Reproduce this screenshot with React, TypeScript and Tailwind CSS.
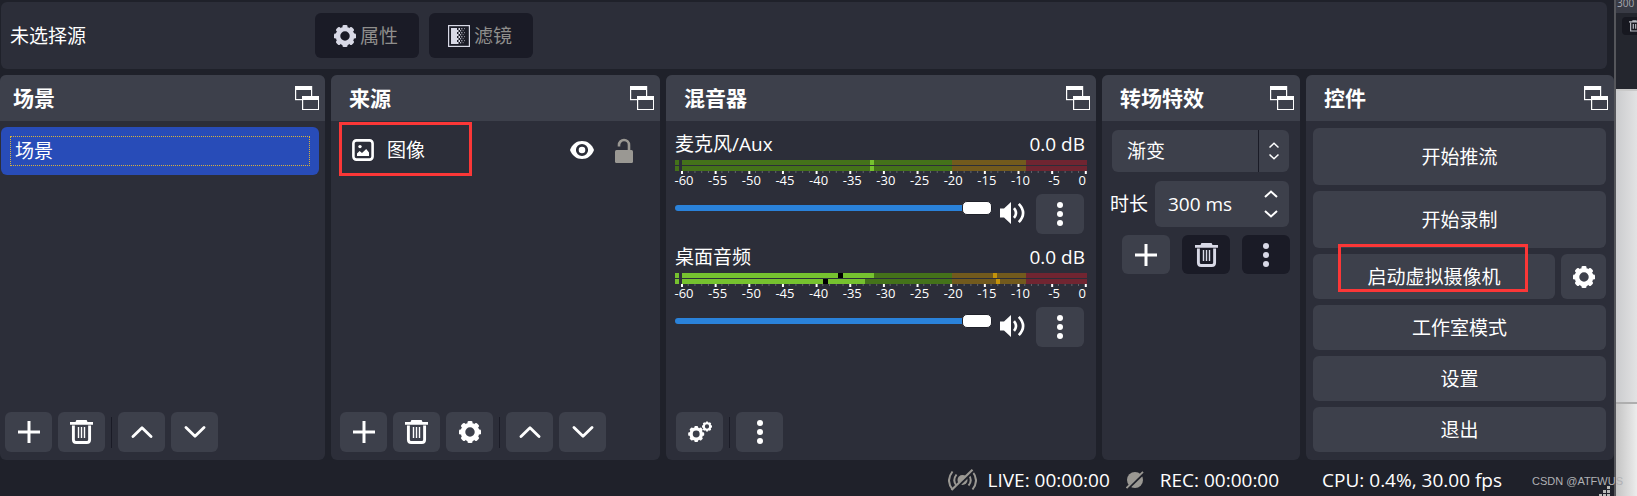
import React, { useState } from "react";
import type { ReactNode } from "react";

/* ---------- icons ---------- */

function GearShape({ cx, cy, r }: { cx: number; cy: number; r: number }) {
  const tooth = r * 0.46;
  return (
    <g>
      <circle cx={cx} cy={cy} r={r * 0.64} fill="none" stroke="currentColor" strokeWidth={r * 0.42} />
      {[0, 45, 90, 135, 180, 225, 270, 315].map((a) => (
        <rect
          key={a}
          x={cx - tooth / 2}
          y={cy - r}
          width={tooth}
          height={r * 0.3}
          rx={r * 0.12}
          fill="currentColor"
          transform={`rotate(${a} ${cx} ${cy})`}
        />
      ))}
    </g>
  );
}

const GearIcon = () => (
  <svg className="size-[22px] shrink-0" viewBox="0 0 22 22" aria-hidden="true">
    <GearShape cx={11} cy={11} r={11} />
  </svg>
);

const GearsIcon = () => (
  <svg className="size-6 shrink-0" viewBox="0 0 24 24" aria-hidden="true">
    <GearShape cx={8.2} cy={14} r={8} />
    <GearShape cx={19} cy={6.5} r={5} />
  </svg>
);

const PlusIcon = () => (
  <svg className="size-[22px] shrink-0" viewBox="0 0 22 22" fill="none" stroke="currentColor" strokeWidth="3" aria-hidden="true">
    <path d="M11 0v22M0 11h22" />
  </svg>
);

const TrashIcon = () => (
  <svg className="h-6 w-[23px] shrink-0" viewBox="0 0 23 24" fill="none" stroke="currentColor" aria-hidden="true">
    <path d="M0 3.3h23" strokeWidth="2.8" />
    <path d="M7 1.2h9" strokeWidth="2.4" strokeLinecap="round" />
    <path d="M3.4 5.5v14.2q0 2.8 2.8 2.8h10.6q2.8 0 2.8-2.8V5.5" strokeWidth="2.9" />
    <path d="M8.5 7v11M11.5 7v11M14.5 7v11" strokeWidth="1.4" />
  </svg>
);

const ChevronIcon = ({ down = false }: { down?: boolean }) => (
  <svg className="h-3 w-[22px] shrink-0" viewBox="0 0 22 12" fill="none" stroke="currentColor" strokeWidth="2.8" strokeLinecap="round" strokeLinejoin="round" aria-hidden="true">
    <path d={down ? "M2 1.5l9 8.8 9-8.8" : "M2 10.5l9-8.8 9 8.8"} />
  </svg>
);

const DotsIcon = () => (
  <svg className="h-6 w-[6px] shrink-0" viewBox="0 0 6 24" fill="currentColor" aria-hidden="true">
    <circle cx="3" cy="3" r="3" />
    <circle cx="3" cy="12" r="3" />
    <circle cx="3" cy="21" r="3" />
  </svg>
);

const FilterIcon = () => (
  <svg className="size-[22px] shrink-0" viewBox="0 0 22 22" fill="currentColor" aria-hidden="true">
    <rect x="0.6" y="0.6" width="20.8" height="20.8" fill="none" stroke="currentColor" strokeWidth="1.2" />
    <rect x="3" y="3" width="6" height="16" />
    {[0, 1, 2, 3, 4, 5, 6, 7].map((i) => (
      <g key={i}>
        <rect x={i % 2 ? 9 : 10.5} y={3 + i * 2} width="1.5" height="2" />
        <rect x={i % 2 ? 12 : 13.2} y={3 + i * 2} width="1.2" height="1.4" opacity="0.8" />
        <rect x={i % 2 ? 14.6 : 16} y={3 + i * 2} width="1" height="1.2" opacity="0.55" />
      </g>
    ))}
  </svg>
);

const PopoutIcon = () => (
  <svg className="size-6 shrink-0" viewBox="0 0 24 24" aria-hidden="true">
    <rect x="0.6" y="0.6" width="16" height="13" fill="none" stroke="#fff" strokeWidth="1.2" />
    <rect x="0" y="0" width="17" height="4" fill="#fff" />
    <rect x="7.6" y="10.6" width="16" height="13" fill="#3d404b" stroke="#fff" strokeWidth="1.2" />
    <rect x="7" y="10" width="17" height="4" fill="#fff" />
  </svg>
);

const ImageIcon = () => (
  <svg className="size-[22px] shrink-0" viewBox="0 0 22 22" aria-hidden="true">
    <rect x="1.4" y="1.4" width="19.2" height="19.2" rx="3" fill="none" stroke="#fff" strokeWidth="2.6" />
    <circle cx="8" cy="7.6" r="1.7" fill="#fff" />
    <path d="M5 17v-2.4l2.6-2.6 2.4 2 4.2-4L17 13.6V17z" fill="#fff" />
  </svg>
);

const EyeIcon = () => (
  <svg className="h-5 w-6" viewBox="0 0 24 20" aria-hidden="true">
    <path d="M0 10C2 4.4 6.5 1 12 1s10 3.4 12 9c-2 5.6-6.5 9-12 9S2 15.6 0 10z" fill="#fff" />
    <circle cx="12" cy="10" r="4.7" fill="none" stroke="#2c2e39" strokeWidth="2.8" />
  </svg>
);

const UnlockIcon = () => (
  <svg className="h-[25px] w-[18px]" viewBox="0 0 18 25" aria-hidden="true">
    <rect x="0" y="12" width="18" height="13" rx="1.5" fill="#9a9893" />
    <path d="M4 8.5V7a5 5 0 0 1 10 0v6" fill="none" stroke="#9a9893" strokeWidth="2.6" />
  </svg>
);

const SpeakerIcon = () => (
  <svg className="h-[22px] w-[25px]" viewBox="0 0 25 22" fill="none" stroke="#fff" strokeWidth="2.6" aria-hidden="true">
    <path d="M0 6.5h4L11 0v22l-7-6.5H0z" fill="#fff" stroke="none" />
    <path d="M14 6.2q4 4.8 0 9.6M18.8 1.8q8.6 9.2 0 18.4" />
  </svg>
);

const LiveIcon = () => (
  <svg className="h-[22px] w-[29px]" viewBox="0 0 29 22" fill="none" stroke="#9a9893" strokeWidth="2" aria-hidden="true">
    <path d="M4.5 2.5q-7 9 0 18M8.5 5.5q-4.5 6 0 11M24.5 2.5q7 9 0 18M20.5 5.5q4.5 6 0 11" />
    <circle cx="14.5" cy="11" r="5" fill="#9a9893" stroke="none" />
    <path d="M4.5 22.5L25.5 2" stroke="#1f212a" strokeWidth="2.5" />
    <path d="M3.5 21L24.5 0.8" strokeWidth="2.2" />
  </svg>
);

const RecIcon = () => (
  <svg className="size-[18px]" viewBox="0 0 18 18" aria-hidden="true">
    <circle cx="9" cy="9" r="8" fill="#9a9893" />
    <path d="M1 18.5L18.5 1.5" stroke="#1f212a" strokeWidth="2.4" />
    <path d="M0.5 17L17 0.8" stroke="#9a9893" strokeWidth="1.8" />
  </svg>
);

/* ---------- building blocks ---------- */

function Dock({ title, children }: { title: string; children: ReactNode }) {
  return (
    <section className="group flex min-w-0 flex-col overflow-hidden rounded-md bg-[#2c2e39]">
      <header className="flex h-[46px] shrink-0 items-center justify-between bg-[#3d404b] pr-[6px] pl-[18px] group-first:pl-[13px]">
        <h2 className="text-[21px] leading-6 font-bold text-white">{title}</h2>
        <button aria-label={`${title} 浮动`}>
          <PopoutIcon />
        </button>
      </header>
      {children}
    </section>
  );
}

function ToolButton({ label, children }: { label: string; children: ReactNode }) {
  return (
    <button aria-label={label} className="flex h-10 w-[47px] items-center justify-center rounded-md bg-[#3d404b] text-white">
      {children}
    </button>
  );
}

const Separator = () => <span className="h-[31px] w-px bg-[#1a1b26]" />;

function WideButton({ children, tall = false }: { children: ReactNode; tall?: boolean }) {
  return (
    <button className={`w-full rounded-md bg-[#3d404b] text-center text-white ${tall ? "h-[57px]" : "h-[45px]"}`}>
      {children}
    </button>
  );
}

/* Level meter: positions are percentages of a 412-unit wide scale. */
const pct = (v: number) => `${(v / 412) * 100}%`;

type Mark = { x: number; w: number; color: string };

function Meter({ rows }: { rows: Mark[][] }) {
  const ticks = Array.from({ length: 61 }, (_, i) => i);
  return (
    <svg className="block h-[31px] w-full overflow-visible" aria-label="电平">
      {rows.map((marks, r) => (
        <g key={r}>
          {[
            { x: 0, w: 4, color: "#44721a" },
            { x: 7, w: 270, color: "#44721a" },
            { x: 277, w: 74, color: "#725a1d" },
            { x: 351, w: 61, color: "#702531" },
            ...marks,
          ].map((m, i) => (
            <rect key={i} x={pct(m.x)} y={r * 6} width={pct(m.w)} height={5} fill={m.color} />
          ))}
        </g>
      ))}
      {ticks.map((i) => (
        <rect
          key={i}
          x={pct(6 + i * 6.73)}
          y={11}
          width={i % 5 === 0 ? 2 : 1}
          height={i % 5 === 0 ? 3 : 2}
          fill={i % 5 === 0 ? "#fff" : "#62646c"}
        />
      ))}
      {ticks
        .filter((i) => i % 5 === 0)
        .map((i) => (
          <text
            key={i}
            x={i === 60 ? pct(411) : pct(9 + i * 6.73)}
            y={25}
            fontSize="13"
            fill="#fff"
            textAnchor={i === 60 ? "end" : "middle"}
          >
            {i - 60}
          </text>
        ))}
    </svg>
  );
}

function Channel({ name, rows }: { name: string; rows: Mark[][] }) {
  const [volume, setVolume] = useState(100);
  return (
    <div className="flex h-[113px] flex-col">
      <div className="flex items-center justify-between pr-[2px] leading-7">
        <span>{name}</span>
        <span>0.0 dB</span>
      </div>
      <div className="pt-[2px]">
        <Meter rows={rows} />
      </div>
      <div className="flex items-start pt-[3px] pr-[3px]">
        <input
          type="range"
          aria-label={`${name} 音量`}
          value={volume}
          onChange={(e) => setVolume(Number(e.target.value))}
          className="mt-[6px] h-4 min-w-0 flex-1 appearance-none bg-transparent [&::-webkit-slider-runnable-track]:h-[6px] [&::-webkit-slider-runnable-track]:rounded-sm [&::-webkit-slider-runnable-track]:bg-[#2a82da] [&::-webkit-slider-thumb]:-mt-[4px] [&::-webkit-slider-thumb]:h-[14px] [&::-webkit-slider-thumb]:w-[30px] [&::-webkit-slider-thumb]:appearance-none [&::-webkit-slider-thumb]:rounded-[5px] [&::-webkit-slider-thumb]:border [&::-webkit-slider-thumb]:border-[#1f212a] [&::-webkit-slider-thumb]:bg-white"
        />
        <button aria-label={`${name} 静音`} className="mt-2 ml-2">
          <SpeakerIcon />
        </button>
        <button aria-label={`${name} 选项`} className="ml-[11px] flex h-10 w-12 items-center justify-center rounded-md bg-[#3d404b]">
          <DotsIcon />
        </button>
      </div>
    </div>
  );
}

/* ---------- page ---------- */

export default function App() {
  const [duration, setDuration] = useState("300 ms");
  return (
    <div className="relative flex min-h-screen overflow-hidden bg-[#1f212a] font-['Open_Sans','Noto_Sans_CJK_SC',sans-serif] text-[19px] leading-6 text-white">
      <main className="flex min-w-0 flex-1 flex-col pt-[2px]">
        <div className="mr-[7px] ml-px flex h-[67px] items-center rounded-md bg-[#2c2e39] pl-[9px]">
          <span className="w-[305px]">未选择源</span>
          <div className="flex gap-[10px] text-[#8f8e8c]">
            <button disabled className="flex h-[45px] w-[104px] items-center justify-center gap-1 rounded-md bg-[#1a1b26] pr-[2px]">
              <span className="text-[#d8d9e6]"><GearIcon /></span>
              属性
            </button>
            <button disabled className="flex h-[45px] w-[104px] items-center justify-center gap-1 rounded-md bg-[#1a1b26] pr-[2px]">
              <span className="text-[#d8d9e6]"><FilterIcon /></span>
              滤镜
            </button>
          </div>
        </div>

        <div className="mt-[6px] grid flex-1 grid-cols-[325fr_329fr_430fr_198fr_308fr] gap-[6px]">
          <Dock title="场景">
            <ul className="flex-1 pt-[6px] pr-[6px] pl-px">
              <li className="rounded-md bg-[#284cb8] p-[9px]">
                <button className="block w-full border border-dotted border-[#d8b23c] px-[4px] py-[2px] text-left">场景</button>
              </li>
            </ul>
            <div className="flex items-center gap-[6px] pb-2 pl-[5px]">
              <ToolButton label="添加场景"><PlusIcon /></ToolButton>
              <ToolButton label="删除场景"><TrashIcon /></ToolButton>
              <Separator />
              <ToolButton label="上移场景"><ChevronIcon /></ToolButton>
              <ToolButton label="下移场景"><ChevronIcon down /></ToolButton>
            </div>
          </Dock>

          <Dock title="来源">
            <ul className="flex-1 pt-px pl-2">
              <li className="flex items-center">
                <div className="flex h-[54px] w-[133px] items-center gap-[13px] border-[3px] border-[#fb3737] pt-[2px] pl-[10px]">
                  <ImageIcon />
                  <span>图像</span>
                </div>
                <div className="ml-auto flex items-center gap-[21px] pt-[2px] pr-[27px]">
                  <button aria-label="隐藏图像"><EyeIcon /></button>
                  <button aria-label="锁定图像"><UnlockIcon /></button>
                </div>
              </li>
            </ul>
            <div className="flex items-center gap-[6px] pb-2 pl-[9px]">
              <ToolButton label="添加来源"><PlusIcon /></ToolButton>
              <ToolButton label="删除来源"><TrashIcon /></ToolButton>
              <ToolButton label="来源属性"><GearIcon /></ToolButton>
              <Separator />
              <ToolButton label="上移来源"><ChevronIcon /></ToolButton>
              <ToolButton label="下移来源"><ChevronIcon down /></ToolButton>
            </div>
          </Dock>

          <Dock title="混音器">
            <div className="flex-1 px-[9px] pt-[9px]">
              <Channel
                name="麦克风/Aux"
                rows={[
                  [{ x: 195, w: 4, color: "#76c22f" }],
                  [{ x: 195, w: 4, color: "#76c22f" }],
                ]}
              />
              <Channel
                name="桌面音频"
                rows={[
                  [
                    { x: 0, w: 4, color: "#76c22f" },
                    { x: 7, w: 192, color: "#76c22f" },
                    { x: 163, w: 5, color: "#000" },
                    { x: 318, w: 4, color: "#c4930b" },
                  ],
                  [
                    { x: 0, w: 4, color: "#76c22f" },
                    { x: 7, w: 183, color: "#76c22f" },
                    { x: 148, w: 5, color: "#000" },
                    { x: 321, w: 4, color: "#c4930b" },
                  ],
                ]}
              />
            </div>
            <div className="flex items-center gap-[6px] pb-2 pl-[10px]">
              <ToolButton label="高级音频属性"><GearsIcon /></ToolButton>
              <Separator />
              <ToolButton label="混音器菜单"><DotsIcon /></ToolButton>
            </div>
          </Dock>

          <Dock title="转场特效">
            <div className="flex flex-col pt-[9px] pr-[11px] pl-[8px]">
              <div className="relative ml-[2px]">
                <select aria-label="转场" className="h-[42px] w-full appearance-none rounded-md bg-[#3d404b] pl-[15px] text-white">
                  <option>渐变</option>
                </select>
                <span className="pointer-events-none absolute inset-y-0 right-0 flex w-[31px] items-center justify-center border-l border-[#1a1b26]">
                  <svg className="h-[18px] w-[10px]" viewBox="0 0 10 18" fill="none" stroke="#fff" strokeWidth="1.5" aria-hidden="true">
                    <path d="M0.5 5.5L5 1.2l4.5 4.3M0.5 12.5L5 16.8l4.5-4.3" />
                  </svg>
                </span>
              </div>
              <div className="mt-[9px] flex items-center">
                <label htmlFor="duration" className="w-[45px] shrink-0">时长</label>
                <div className="flex h-[46px] min-w-0 flex-1 items-center rounded-md bg-[#3d404b] pr-[11px] pl-[13px]">
                  <input
                    id="duration"
                    value={duration}
                    onChange={(e) => setDuration(e.target.value)}
                    className="min-w-0 flex-1 bg-transparent text-white outline-none"
                  />
                  <span className="flex flex-col gap-3">
                    {[false, true].map((down) => (
                      <button key={String(down)} aria-label={down ? "减少时长" : "增加时长"}>
                        <svg className="block h-2 w-[14px]" viewBox="0 0 14 8" fill="none" stroke="#fff" strokeWidth="2" aria-hidden="true">
                          <path d={down ? "M1 1l6 5.5L13 1" : "M1 7l6-5.5L13 7"} />
                        </svg>
                      </button>
                    ))}
                  </span>
                </div>
              </div>
              <div className="mt-2 -mr-px ml-3 flex justify-between">
                <button aria-label="添加转场" className="flex h-[39px] w-12 items-center justify-center rounded-md bg-[#3d404b]"><PlusIcon /></button>
                <button disabled aria-label="删除转场" className="flex h-[39px] w-12 items-center justify-center rounded-md bg-[#1a1b26] text-[#d8d9e6]"><TrashIcon /></button>
                <button disabled aria-label="转场选项" className="flex h-[39px] w-12 items-center justify-center rounded-md bg-[#1a1b26] text-[#d8d9e6]"><DotsIcon /></button>
              </div>
            </div>
          </Dock>

          <Dock title="控件">
            <div className="flex flex-col gap-[6px] pt-[7px] pr-2 pb-2 pl-[7px]">
              <WideButton tall>开始推流</WideButton>
              <WideButton tall>开始录制</WideButton>
              <div className="flex gap-[6px]">
                <div className="relative flex-1">
                  <WideButton>启动虚拟摄像机</WideButton>
                  <span className="pointer-events-none absolute -top-[10px] right-[27px] left-[25px] h-12 border-[3px] border-[#fb3737]" />
                </div>
                <button aria-label="虚拟摄像机设置" className="flex h-[45px] w-[45px] items-center justify-center rounded-md bg-[#3d404b]"><GearIcon /></button>
              </div>
              <WideButton>工作室模式</WideButton>
              <WideButton>设置</WideButton>
              <WideButton>退出</WideButton>
            </div>
          </Dock>
        </div>

        <footer className="flex h-9 items-center justify-end pt-[3px] pr-[112px]">
          <LiveIcon />
          <span className="ml-[11px]">LIVE: 00:00:00</span>
          <span className="ml-4"><RecIcon /></span>
          <span className="ml-4">REC: 00:00:00</span>
          <span className="ml-[43px]">CPU: 0.4%, 30.00 fps</span>
        </footer>
      </main>

      <aside className="flex w-[23px] shrink-0 flex-col overflow-hidden border-l-2 border-[#55565b]">
        <div className="h-[13px] bg-[#393b45] pl-px text-[10px] leading-[6px] text-[#a9aab0]">300</div>
        <div className="flex h-[76px] bg-[#24262e] pt-1">
          <span className="h-[18px] w-[2px] rounded-r-sm bg-[#393b45]" />
          <span className="ml-[6px] flex h-[18px] flex-1 items-center rounded-l-sm bg-[#171820] pl-[7px] text-[#b9bac2]">
            <svg className="h-3 w-[11px] shrink-0" viewBox="0 0 23 24" fill="none" stroke="currentColor" strokeWidth="2.5" aria-hidden="true">
              <path d="M0 3.3h23M7 1.2h9M3.4 5v17.5h16.2V5M9 8v10M14 8v10" />
            </svg>
          </span>
        </div>
        <div className="h-[315px] border-t-2 border-b-2 border-t-[#c9c9c9] border-b-[#aeaeae] bg-linear-to-r from-[#cbccce] to-[#e2e2e3]" />
        <div className="flex-1 bg-linear-to-r from-[#c4c4c4] to-[#ececec]" />
      </aside>

      <svg className="absolute right-[26px] bottom-0 h-[10px] w-3" viewBox="0 0 12 10" fill="#b9bab8" aria-hidden="true">
        <path d="M8 0h3v3H8zM4 4h3v3H4zM8 4h3v3H8zM0 8h3v2H0zM4 8h3v2H4zM8 8h3v2H8z" />
      </svg>
      <span className="absolute right-[14px] bottom-[7px] font-['Liberation_Sans','Noto_Sans',sans-serif] text-[11px] leading-4 text-[#b0b1b5]">CSDN @ATFWUS</span>
    </div>
  );
}
